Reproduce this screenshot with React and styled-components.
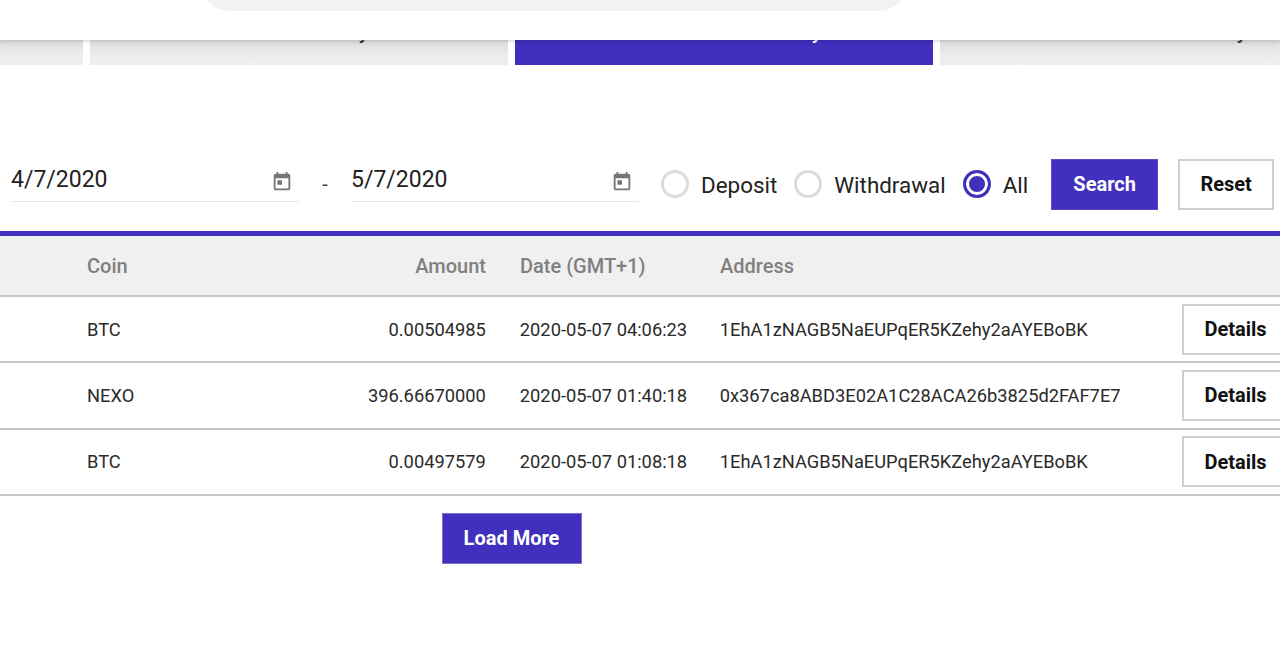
import styled, { createGlobalStyle } from "styled-components";

const rows = [
  { coin: "BTC", amount: "0.00504985", date: "2020-05-07 04:06:23", address: "1EhA1zNAGB5NaEUPqER5KZehy2aAYEBoBK" },
  { coin: "NEXO", amount: "396.66670000", date: "2020-05-07 01:40:18", address: "0x367ca8ABD3E02A1C28ACA26b3825d2FAF7E7A1C2" },
  { coin: "BTC", amount: "0.00497579", date: "2020-05-07 01:08:18", address: "1EhA1zNAGB5NaEUPqER5KZehy2aAYEBoBK" },
];

const CalendarIcon = () => (
  <CalendarSvg viewBox="0 0 24 24">
    <path d="M19 3h-1V1h-2v2H8V1H6v2H5c-1.11 0-1.99.9-1.99 2L3 19c0 1.1.89 2 2 2h14c1.1 0 2-.9 2-2V5c0-1.1-.9-2-2-2zm0 16H5V8h14v11zM7 10h5v5H7z" />
  </CalendarSvg>
);

const App = () => {
  return (
    <Page>
      <GlobalStyle />
      <Header>
        <SearchPill />
      </Header>
      <Tabs>
        <Tab $width={83} />
        <Tab $width={418}>
          <TabLabel>Order History</TabLabel>
        </Tab>
        <Tab $width={418} $active>
          <TabLabel>Transaction History</TabLabel>
        </Tab>
        <Tab $width={418}>
          <TabLabel>Transaction History</TabLabel>
        </Tab>
      </Tabs>

      <Filters>
        <DateField>
          <DateValue>4/7/2020</DateValue>
          <CalendarIcon />
        </DateField>
        <Dash>-</Dash>
        <DateField>
          <DateValue>5/7/2020</DateValue>
          <CalendarIcon />
        </DateField>
        <RadioGroup>
          <RadioLabel>
            <Radio />
            Deposit
          </RadioLabel>
          <RadioLabel>
            <Radio />
            Withdrawal
          </RadioLabel>
          <RadioLabel>
            <Radio $checked />
            All
          </RadioLabel>
        </RadioGroup>
        <SearchButton>Search</SearchButton>
        <ResetButton>Reset</ResetButton>
      </Filters>

      <Table>
        <HeadRow>
          <Cell>Coin</Cell>
          <AmountCell>Amount</AmountCell>
          <Cell>Date (GMT+1)</Cell>
          <Cell>Address</Cell>
        </HeadRow>
        {rows.map(({ coin, amount, date, address }, i) => {
          return (
            <Row key={i}>
              <Cell>{coin}</Cell>
              <AmountCell>{amount}</AmountCell>
              <Cell>{date}</Cell>
              <AddressCell>{address}</AddressCell>
              <DetailsButton>Details</DetailsButton>
            </Row>
          );
        })}
      </Table>

      <LoadMoreBox>
        <LoadMoreButton>Load More</LoadMoreButton>
      </LoadMoreBox>
    </Page>
  );
};

const GlobalStyle = createGlobalStyle`
  html, body {
    margin: 0;
    padding: 0;
    background: #fff;
    overflow: hidden;
  }
  * {
    box-sizing: border-box;
  }
`;

const Page = styled.div`
  width: 1280px;
  height: 660px;
  overflow: hidden;
  background: #fff;
  font-family: Roboto, "Liberation Sans", sans-serif;
  color: #222;
`;

const Header = styled.div`
  position: relative;
  z-index: 2;
  height: 40px;
  background: #fff;
  box-shadow: 0 1px 4px rgba(0, 0, 0, 0.18);
  display: flex;
  justify-content: center;
`;

const SearchPill = styled.div`
  width: 708px;
  height: 40px;
  margin-top: -29px;
  margin-left: -172px;
  background: #f1f2f4;
  border-radius: 0 0 30px 30px;
`;

const Tabs = styled.div`
  display: flex;
  gap: 7px;
  height: 25px;
`;

const Tab = styled.div`
  flex: 0 0 ${(p) => p.$width}px;
  height: 25px;
  text-align: center;
  color: ${(p) => (p.$active ? "#fff" : "#333")};
  background: ${(p) =>
    p.$active
      ? "#412fbd"
      : "linear-gradient(to bottom, #dcdcdc 0%, #ebebeb 55%, #efefef 100%)"};
`;

const TabLabel = styled.div`
  margin-top: -23px;
  padding-left: 20px;
  font-size: 20px;
  line-height: 30px;
  font-weight: 500;
  white-space: nowrap;
`;

const Filters = styled.div`
  display: flex;
  align-items: flex-start;
  height: 51px;
  margin-top: 94px;
  padding-left: 11px;
`;

const DateField = styled.div`
  width: 288px;
  height: 43px;
  display: flex;
  align-items: center;
  justify-content: space-between;
  padding: 0 6px 0 0;
  border-bottom: 1px solid #e6e6e6;
`;

const DateValue = styled.span`
  font-size: 23px;
  line-height: 40px;
  color: #222;
`;

const CalendarSvg = styled.svg`
  width: 22px;
  height: 22px;
  margin-top: 3px;
  fill: #757575;
`;

const Dash = styled.span`
  width: 52px;
  text-align: center;
  font-size: 20px;
  line-height: 50px;
  color: #444;
`;

const RadioGroup = styled.div`
  display: flex;
  align-items: center;
  height: 50px;
  margin-left: 22px;
`;

const RadioLabel = styled.label`
  display: flex;
  align-items: center;
  gap: 12px;
  margin-right: 17px;
  padding-top: 2px;
  font-size: 22.4px;
  line-height: 50px;
  color: #222;
`;

const Radio = styled.span`
  width: 28px;
  height: 28px;
  margin-top: -2px;
  border-radius: 50%;
  border: 3px solid ${(p) => (p.$checked ? "#412fbd" : "#dcdcdc")};
  background: ${(p) => (p.$checked ? "#412fbd" : "#fff")};
  box-shadow: ${(p) => (p.$checked ? "inset 0 0 0 3px #fff" : "none")};
`;

const SearchButton = styled.button`
  width: 107px;
  height: 51px;
  margin-left: 6px;
  padding-bottom: 2px;
  border: 1px solid #5a4bc8;
  background: #412fbd;
  color: #fff;
  font-family: inherit;
  font-size: 20px;
  font-weight: 700;
`;

const ResetButton = styled.button`
  width: 96px;
  height: 51px;
  margin-left: 20px;
  padding-bottom: 2px;
  border: 2px solid #cfcfcf;
  background: #fff;
  color: #111;
  font-family: inherit;
  font-size: 20px;
  font-weight: 700;
`;

const Table = styled.div`
  margin-top: 21px;
  border-top: 5px solid #412fbd;
`;

const HeadRow = styled.div`
  display: flex;
  align-items: center;
  height: 61px;
  padding-left: 87px;
  background: #f0f0f1;
  border-bottom: 2px solid #c9c9c9;
  font-size: 20px;
  font-weight: 500;
  color: #808080;
`;

const Row = styled.div`
  display: flex;
  align-items: center;
  width: 1289px;
  height: 66.3px;
  padding-left: 87px;
  border-bottom: 2px solid #c9c9c9;
  font-size: 18.3px;
  color: #2a2a2a;
`;

const Cell = styled.div`
  white-space: nowrap;
  &:first-child {
    width: 100px;
  }
  &:nth-child(3) {
    width: 200px;
    margin-left: 34px;
  }
`;

const AmountCell = styled.div`
  width: 299px;
  text-align: right;
  white-space: nowrap;
`;

const AddressCell = styled.div`
  width: 400px;
  overflow: hidden;
  white-space: nowrap;
`;

const DetailsButton = styled.button`
  width: 107px;
  height: 51px;
  margin-left: 62.5px;
  border: 2px solid #cfcfcf;
  background: #fff;
  color: #111;
  font-family: inherit;
  font-size: 20px;
  font-weight: 700;
`;

const LoadMoreBox = styled.div`
  width: 1023px;
  display: flex;
  justify-content: center;
  margin-top: 17px;
`;

const LoadMoreButton = styled.button`
  width: 140px;
  height: 51px;
  border: 1px solid #7c70d4;
  background: #412fbd;
  color: #fff;
  font-family: inherit;
  font-size: 20px;
  font-weight: 700;
`;

export default App;
